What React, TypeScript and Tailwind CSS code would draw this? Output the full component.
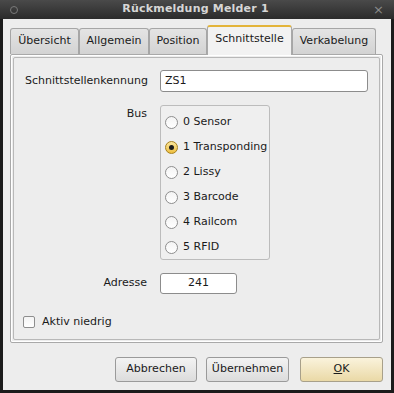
import { useState } from 'react'

const TABS = ['Übersicht', 'Allgemein', 'Position', 'Schnittstelle', 'Verkabelung']
const TAB_WIDTHS = ['w-[69px]', 'w-[70px]', 'w-[58px]', 'w-[85px]', 'w-[84px]']
const BUSES = ['0 Sensor', '1 Transponding', '2 Lissy', '3 Barcode', '4 Railcom', '5 RFID']

function Radio({ checked }: { checked: boolean }) {
  return checked ? (
    <span className="shrink-0 w-[13px] h-[13px] rounded-full border border-[#a7811f] bg-gradient-to-b from-[#fbe69a] to-[#eebf3a] flex items-center justify-center">
      <span className="w-[5px] h-[5px] rounded-full bg-[#1c1c1c]" />
    </span>
  ) : (
    <span className="shrink-0 w-[13px] h-[13px] rounded-full border border-[#8e8e8e] bg-gradient-to-b from-[#f4f4f4] to-white" />
  )
}

export default function App() {
  const [bus, setBus] = useState(1)
  const [active, setActive] = useState(false)

  return (
    <div className="w-[394px] h-[393px] bg-[#1b1b1b] flex flex-col text-[11px] text-[#1a1a1a] font-['DejaVu_Sans',sans-serif] whitespace-nowrap">
      <div className="h-[19px] bg-gradient-to-b from-[#4a4a4a] to-[#2b2b2b] flex items-center px-[10px] text-[#d6d6d6]">
        <span className="w-[8px] h-[8px] rounded-full border border-[#7a7a7a]" />
        <span className="flex-1 text-center font-bold text-[11px] tracking-[0.2px]">Rückmeldung Melder 1</span>
        <span className="text-[#8a8a8a] text-[13px] leading-none">×</span>
      </div>

      <div className="flex-1 mx-[3px] mb-[3px] bg-[#ededed] flex flex-col px-[7px] pt-[6px]">
        <div className="flex items-end h-[29px]">
          {TABS.map((t, i) =>
            i === 3 ? (
              <div
                key={t}
                className={`${TAB_WIDTHS[i]} h-[30px] -mb-px relative z-10 bg-[#f2f2f2] border border-b-0 border-[#a9a9a9] border-t-2 border-t-[#e3b43a] rounded-t-[3px] flex items-center justify-center pb-[3px]`}
              >
                {t}
              </div>
            ) : (
              <div
                key={t}
                className={`${TAB_WIDTHS[i]} h-[26px] bg-gradient-to-b from-[#e4e4e4] to-[#d3d3d3] border border-b-0 border-[#a6a6a6] rounded-t-[3px] flex items-center justify-center`}
              >
                {t}
              </div>
            )
          )}
        </div>

        <div className="w-[373px] h-[289px] border border-[#a9a9a9] rounded-[2px] shadow-[inset_1px_1px_0_#fff,inset_-1px_-1px_0_#fff] p-[2px]">
          <div className="h-full border border-[#b8b8b8] rounded-[2px] flex flex-col pt-[12px] pl-[11px]">
            <div className="flex items-center h-[22px]">
              <span className="w-[135px]">Schnittstellenkennung</span>
              <div className="w-[208px] h-[22px] bg-white border border-[#8c8c8c] rounded-[3px] flex items-center px-[4px]">
                ZS1
              </div>
            </div>

            <div className="flex mt-[13px]">
              <span className="w-[135px] text-right pr-[13px] pt-[1px]">Bus</span>
              <div className="w-[110px] h-[155px] border border-[#bcbcbc] rounded-[3px] bg-[#efefef] pt-[4px] pl-[4px]">
                {BUSES.map((b, i) => (
                  <div key={b} className="h-[25px] flex items-center gap-[5px] cursor-default" onClick={() => setBus(i)}>
                    <Radio checked={bus === i} />
                    <span>{b}</span>
                  </div>
                ))}
              </div>
            </div>

            <div className="flex items-center mt-[13px]">
              <span className="w-[135px] text-right pr-[13px]">Adresse</span>
              <div className="w-[77px] h-[21px] bg-white border border-[#8c8c8c] rounded-[3px] flex items-center justify-center">
                241
              </div>
            </div>

            <div className="flex items-center gap-[7px] mt-[20px] -ml-[2px] cursor-default" onClick={() => setActive(!active)}>
              <span className="w-[12px] h-[12px] border border-[#8e8e8e] rounded-[2px] bg-gradient-to-b from-[#f4f4f4] to-white flex items-center justify-center text-[10px] leading-none">
                {active ? '✓' : ''}
              </span>
              <span>Aktiv niedrig</span>
            </div>
          </div>
        </div>

        <div className="flex justify-end gap-[9px] mt-[14px] pr-[1px]">
          <button className="w-[82px] h-[25px] border border-[#9a9a9a] rounded-[3px] bg-gradient-to-b from-[#f3f3f3] to-[#dcdcdc]">
            Abbrechen
          </button>
          <button className="w-[83px] h-[25px] border border-[#9a9a9a] rounded-[3px] bg-gradient-to-b from-[#f3f3f3] to-[#dcdcdc] mr-[2px]">
            Übernehmen
          </button>
          <button className="w-[83px] h-[25px] border border-[#a8a08a] rounded-[3px] bg-gradient-to-b from-[#faf3dc] to-[#ead9a6]">
            <span className="underline">O</span>K
          </button>
        </div>
      </div>
    </div>
  )
}
